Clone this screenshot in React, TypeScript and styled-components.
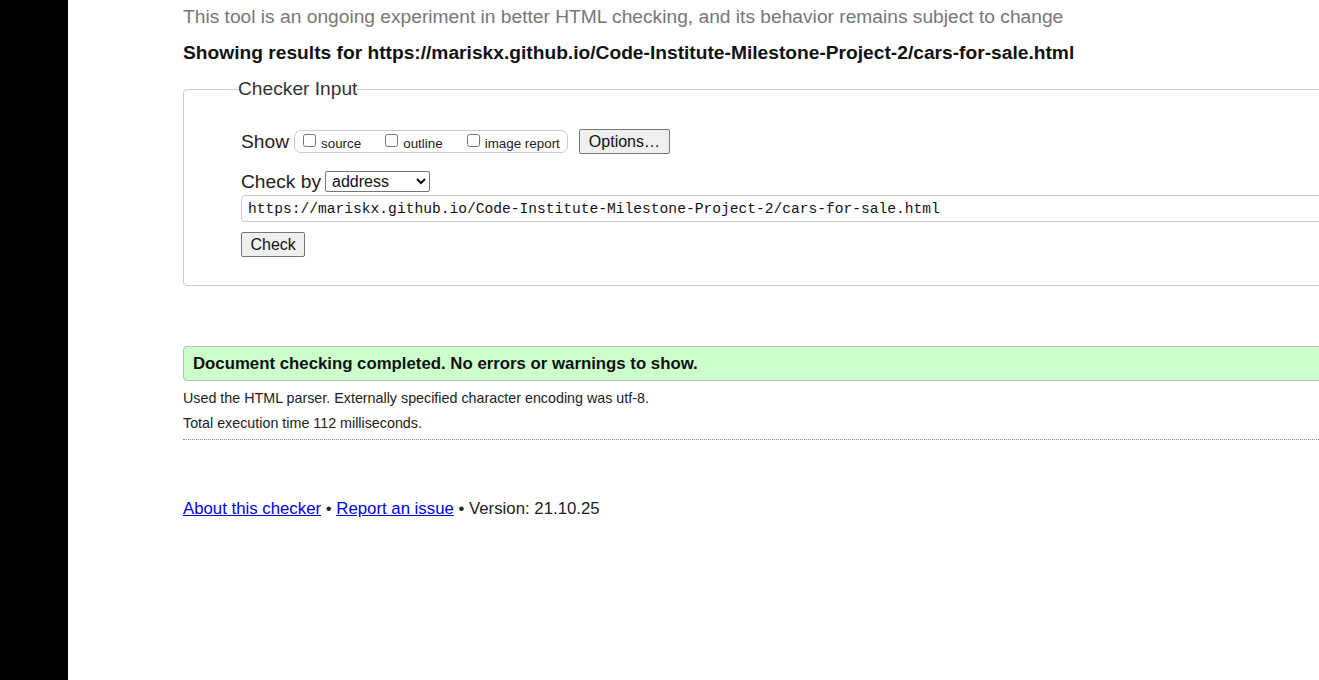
import styled, { createGlobalStyle } from "styled-components";

const GlobalStyle = createGlobalStyle`
  html, body {
    margin: 0;
    padding: 0;
    background: #fff;
    overflow: hidden;
  }
  body {
    font-family: "Liberation Sans", Arial, sans-serif;
    color: #222;
  }
`;

export default function App() {
  return (
    <>
      <GlobalStyle />
      <Page>
        <SideBar />
        <Main>
          <Intro>
            This tool is an ongoing experiment in better HTML checking, and its behavior remains subject to change
          </Intro>
          <ResultsFor>
            Showing results for https://mariskx.github.io/Code-Institute-Milestone-Project-2/cars-for-sale.html
          </ResultsFor>

          <Fieldset>
            <Legend>Checker Input</Legend>
            <Row>
              <Label>Show</Label>
              <CheckGroup>
                <CheckItem>
                  <Box type="checkbox" />
                  source
                </CheckItem>
                <CheckItem>
                  <Box type="checkbox" />
                  outline
                </CheckItem>
                <CheckItem>
                  <Box type="checkbox" />
                  image report
                </CheckItem>
              </CheckGroup>
              <Button $wide>Options…</Button>
            </Row>
            <Row $top={15}>
              <Label>Check by</Label>
              <Select defaultValue="address">
                <option value="address">address</option>
                <option value="file">file upload</option>
                <option value="text">text input</option>
              </Select>
            </Row>
            <UrlField
              readOnly
              value="https://mariskx.github.io/Code-Institute-Milestone-Project-2/cars-for-sale.html"
            />
            <Button>Check</Button>
          </Fieldset>

          <Success>Document checking completed. No errors or warnings to show.</Success>
          <Detail>Used the HTML parser. Externally specified character encoding was utf-8.</Detail>
          <Detail>Total execution time 112 milliseconds.</Detail>
          <Divider />

          <Footer>
            <a href="#">About this checker</a> • <a href="#">Report an issue</a> • Version: 21.10.25
          </Footer>
        </Main>
      </Page>
    </>
  );
}

const Page = styled.div`
  display: flex;
  height: 680px;
  width: 1319px;
  overflow: hidden;
`;

const SideBar = styled.div`
  flex: 0 0 68px;
  background: #000;
`;

const Main = styled.div`
  flex: 0 0 1400px;
  padding-left: 115px;
`;

const Intro = styled.p`
  margin: 6px 0 0;
  font-size: 19.2px;
  line-height: 22px;
  color: #777;
  white-space: nowrap;
`;

const ResultsFor = styled.h2`
  margin: 14px 0 0;
  font-size: 19.2px;
  line-height: 22px;
  font-weight: bold;
  color: #111;
  white-space: nowrap;
`;

const Fieldset = styled.fieldset`
  margin: 14px 0 0;
  padding: 29px 0 28px 57px;
  border: 1px solid #ccc;
  border-radius: 4px;
  min-width: 0;
`;

const Legend = styled.legend`
  margin-left: -3px;
  padding: 0;
  font-size: 19.2px;
  line-height: 22px;
  color: #333;
`;

const Row = styled.div<{ $top?: number }>`
  display: flex;
  align-items: center;
  height: 25px;
  margin-top: ${(p) => p.$top ?? 0}px;
`;

const Label = styled.span`
  font-size: 19.2px;
  color: #222;
  margin-right: 4px;
`;

const CheckGroup = styled.span`
  display: inline-flex;
  align-items: center;
  box-sizing: border-box;
  height: 23px;
  margin-left: 1px;
  border: 1px solid #ccc;
  border-radius: 7px;
  padding: 0 7px 0 8px;
  gap: 24px;
`;

const CheckItem = styled.label`
  display: inline-flex;
  align-items: center;
  font-size: 13.4px;
  color: #222;
  padding-top: 3px;
`;

const Box = styled.input`
  width: 13px;
  height: 13px;
  margin: -6px 5px 0 0;
`;

const Button = styled.button<{ $wide?: boolean }>`
  font-family: "Liberation Sans", Arial, sans-serif;
  font-size: 16px;
  height: 25px;
  padding: 0 ${(p) => (p.$wide ? 9 : 8.5)}px;
  margin-left: ${(p) => (p.$wide ? 11 : 0)}px;
  background: #efefef;
  border: 1px solid #767676;
  border-radius: 2px;
  color: #111;
`;

const Select = styled.select`
  font-family: "Liberation Sans", Arial, sans-serif;
  font-size: 16px;
  height: 21px;
  width: 105px;
  padding: 0 2px;
  border: 1px solid #767676;
  border-radius: 2px;
  background: #fff;
  color: #111;
`;

const UrlField = styled.input`
  display: block;
  box-sizing: border-box;
  width: 1200px;
  height: 27px;
  margin: 1px 0 10px;
  padding: 0 6px;
  font-family: "Liberation Mono", "DejaVu Sans Mono", monospace;
  font-size: 14.6px;
  color: #111;
  border: 1px solid #ccc;
  border-radius: 4px;
`;

const Success = styled.p`
  margin: 60px 0 0;
  box-sizing: border-box;
  height: 35px;
  display: flex;
  align-items: center;
  padding: 0 9px;
  background: #ccffcc;
  border: 1px solid #bbb;
  border-radius: 4px;
  font-size: 16.8px;
  font-weight: bold;
  color: #111;
  white-space: nowrap;
`;

const Detail = styled.p`
  margin: 9px 0 0;
  font-size: 14.3px;
  line-height: 16px;
  color: #222;
`;

const Divider = styled.hr`
  margin: 8px 0 0;
  border: 0;
  border-top: 1px dotted #888;
`;

const Footer = styled.p`
  margin: 59px 0 0;
  font-size: 16.8px;
  color: #222;

  a {
    color: #0000ee;
    text-decoration: underline;
  }
`;
